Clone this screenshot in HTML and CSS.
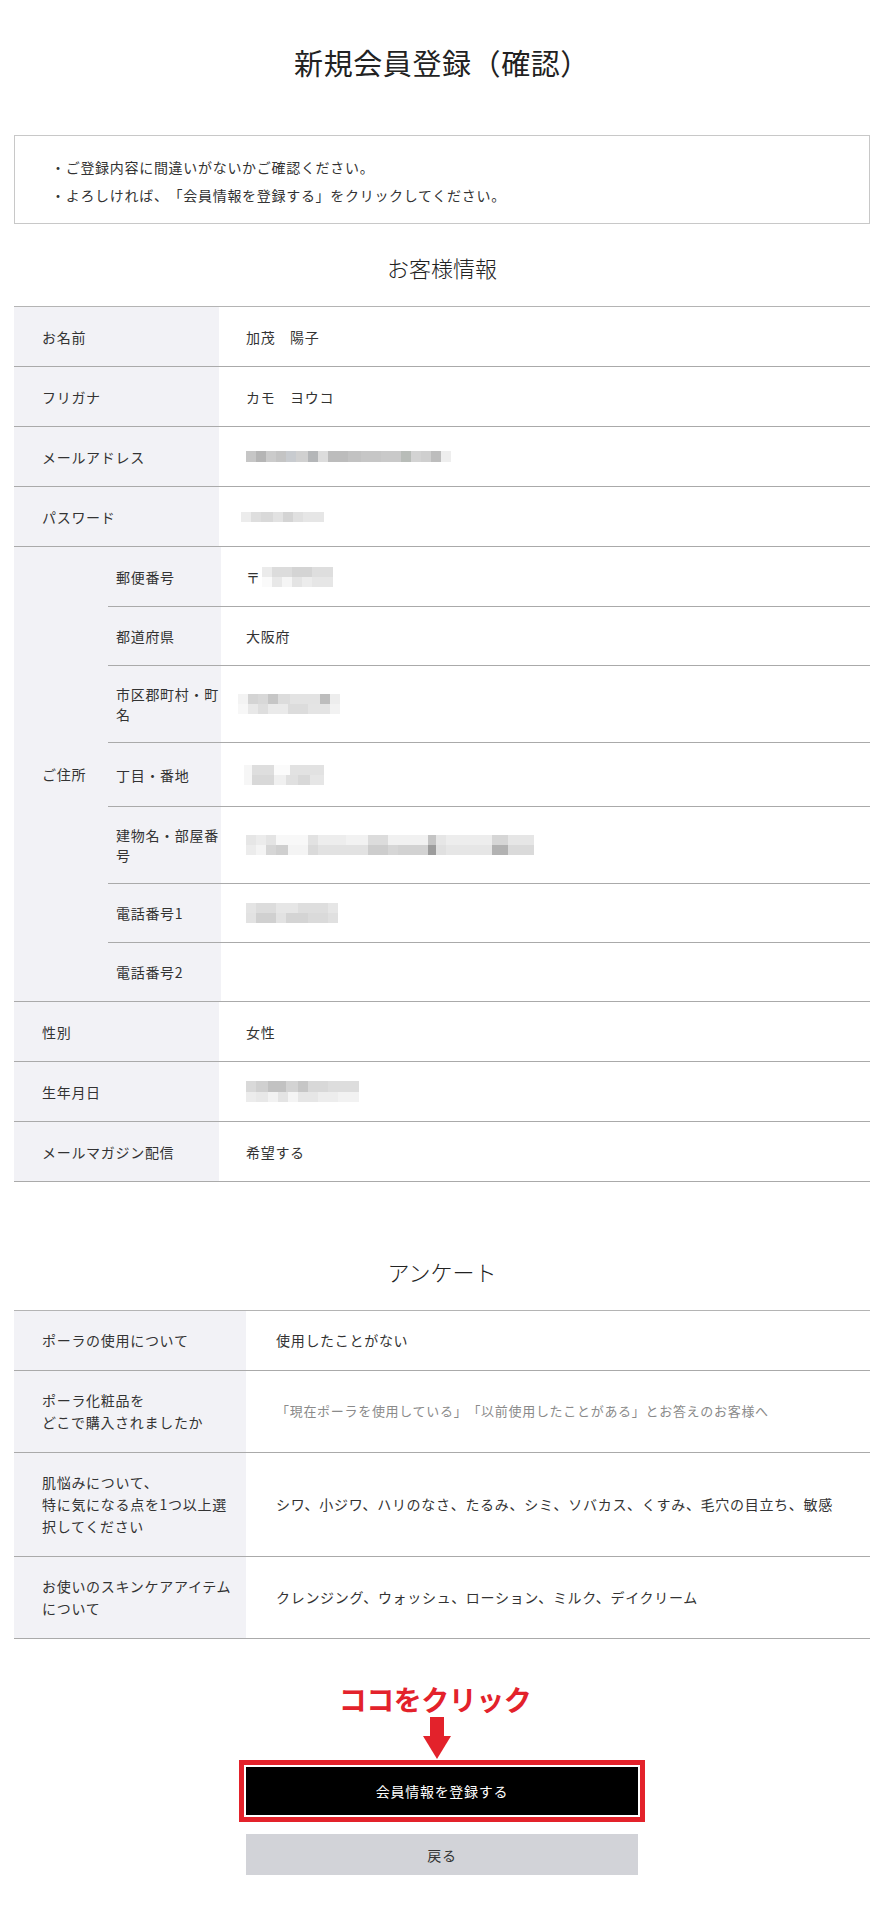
FILE: index.html
```html
<!DOCTYPE html>
<html lang="ja">
<head>
<meta charset="utf-8">
<title>新規会員登録（確認）</title>
<link rel="stylesheet" href="styles.css">
</head>
<body>
<main class="page">
  <h1 class="page-title">新規会員登録（確認）</h1>

  <div class="notice">
    <p>・ご登録内容に間違いがないかご確認ください。</p>
    <p>・よろしければ、「会員情報を登録する」をクリックしてください。</p>
  </div>

  <h2 class="section-title">お客様情報</h2>
  <div class="table info">
    <div class="row"><div class="th">お名前</div><div class="td">加茂　陽子</div></div>
    <div class="row"><div class="th">フリガナ</div><div class="td">カモ　ヨウコ</div></div>
    <div class="row"><div class="th">メールアドレス</div><div class="td"><span class="mosaic mz-mail"></span></div></div>
    <div class="row"><div class="th">パスワード</div><div class="td"><span class="mosaic mz-pass"></span></div></div>
    <div class="row addr">
      <div class="th addr-th">ご住所</div>
      <div class="subrows">
        <div class="subrow"><div class="sth">郵便番号</div><div class="td">〒<span class="mosaic mz-zip"></span></div></div>
        <div class="subrow"><div class="sth">都道府県</div><div class="td">大阪府</div></div>
        <div class="subrow"><div class="sth">市区郡町村・町名</div><div class="td"><span class="mosaic mz-city"></span></div></div>
        <div class="subrow tall"><div class="sth">丁目・番地</div><div class="td"><span class="mosaic mz-block"></span></div></div>
        <div class="subrow"><div class="sth">建物名・部屋番号</div><div class="td"><span class="mosaic mz-bldg"></span></div></div>
        <div class="subrow"><div class="sth">電話番号1</div><div class="td"><span class="mosaic mz-tel"></span></div></div>
        <div class="subrow"><div class="sth">電話番号2</div><div class="td"></div></div>
      </div>
    </div>
    <div class="row"><div class="th">性別</div><div class="td">女性</div></div>
    <div class="row"><div class="th">生年月日</div><div class="td"><span class="mosaic mz-birth"></span></div></div>
    <div class="row"><div class="th">メールマガジン配信</div><div class="td">希望する</div></div>
  </div>

  <h2 class="section-title survey-title">アンケート</h2>
  <div class="table survey">
    <div class="row"><div class="th">ポーラの使用について</div><div class="td">使用したことがない</div></div>
    <div class="row"><div class="th">ポーラ化粧品を<br>どこで購入されましたか</div><div class="td note">「現在ポーラを使用している」「以前使用したことがある」とお答えのお客様へ</div></div>
    <div class="row"><div class="th">肌悩みについて、<br>特に気になる点を1つ以上選択してください</div><div class="td">シワ、小ジワ、ハリのなさ、たるみ、シミ、ソバカス、くすみ、毛穴の目立ち、敏感</div></div>
    <div class="row"><div class="th">お使いのスキンケアアイテムについて</div><div class="td">クレンジング、ウォッシュ、ローション、ミルク、デイクリーム</div></div>
  </div>

  <div class="actions">
    <p class="callout">ココをクリック</p>
    <svg class="arrow" width="28" height="42" viewBox="0 0 28 42" aria-hidden="true">
      <rect x="7" y="0" width="14" height="19" fill="#e3222b"/>
      <polygon points="0,19 28,19 14,42" fill="#e3222b"/>
    </svg>
    <div class="highlight">
      <button class="btn btn-primary" type="button">会員情報を登録する</button>
    </div>
    <button class="btn btn-back" type="button">戻る</button>
  </div>
</main>
</body>
</html>
```
FILE: styles.css
```css
* { box-sizing: border-box; }

html, body {
  margin: 0;
  padding: 0;
  background: #fff;
}

body {
  font-family: "Noto Sans CJK JP", "Noto Sans", sans-serif;
  color: #333;
  font-size: 14px;
  letter-spacing: 0.05em;
  text-spacing-trim: space-all;
}

.page {
  width: 856px;
  margin: 0 auto;
  padding-bottom: 40px;
}

.page-title {
  margin: 42px 0 0;
  font-size: 29px;
  line-height: 40px;
  font-weight: 400;
  letter-spacing: 0.02em;
  text-align: center;
  color: #222;
}

.notice {
  margin-top: 53px;
  border: 1px solid #c8c8c8;
  padding: 17px 20px 14px 36px;
}

.notice p {
  margin: 0;
  line-height: 28px;
  font-size: 14px;
  color: #333;
}

.section-title {
  margin: 27px 0 23px;
  font-size: 22px;
  line-height: 32px;
  font-weight: 300;
  letter-spacing: 0;
  text-align: center;
  color: #222;
}

.survey-title {
  margin-top: 73px;
}

.table {
  border-top: 1px solid #b4b4b4;
}

.row {
  display: flex;
  border-bottom: 1px solid #aaaaaa;
}

.th {
  background: #f2f2f6;
  display: flex;
  align-items: center;
}

.td {
  flex: 1;
  display: flex;
  align-items: center;
  color: #333;
}

/* customer info table */
.info .row {
  min-height: 60px;
}

.info .th {
  width: 205px;
  padding: 18px 10px 18px 28px;
  line-height: 20px;
}

.info .td {
  padding: 18px 10px 18px 27px;
  line-height: 20px;
}

.info .addr-th {
  width: 94px;
  padding-right: 0;
}

.subrows {
  flex: 1;
  display: flex;
  flex-direction: column;
}

.subrow {
  display: flex;
  min-height: 59px;
}

.subrow.tall {
  min-height: 64px;
}

.subrow + .subrow {
  border-top: 1px solid #aaaaaa;
}

.sth {
  width: 113px;
  background: #f2f2f6;
  padding: 18px 0 18px 8px;
  line-height: 20px;
  display: flex;
  align-items: center;
}

.subrow .td {
  padding-left: 25px;
}

/* survey table */
.survey .th {
  width: 232px;
  padding: 18px 12px 19px 28px;
  line-height: 22px;
}

.survey .td {
  padding: 18px 10px 19px 30px;
  line-height: 22px;
}

.survey .td.note {
  font-size: 13px;
  color: #8a8a8a;
}

/* pixelated (blurred) values */
.mosaic {
  display: inline-block;
  background-repeat: no-repeat;
}

.mz-mail {
  width: 205px;
  height: 11px;
  background-image: linear-gradient(90deg,
    #c6c6c6 0 10px, #b5b5b5 10px 20px, #cbcbcb 20px 30px, #c4c4c4 30px 40px,
    #c8cbcf 40px 50px, #d0d0d0 50px 62px, #b4b6b8 62px 72px, #dcdcdc 72px 82px,
    #bcbcbc 82px 102px, #c2c2c2 102px 115px, #c6c6c6 115px 135px, #c9c9c9 135px 155px,
    #b8bcb8 155px 165px, #d3d3d3 165px 175px, #cfcfcf 175px 185px, #bdbdbd 185px 195px,
    #eeeeee 195px 205px);
}

.mz-pass {
  width: 83px;
  height: 10px;
  margin-left: -5px;
  background-image: linear-gradient(90deg,
    #ececec 0 10px, #dedede 10px 20px, #d9d9d9 20px 32px, #e2e2e2 32px 42px,
    #d4d4d4 42px 52px, #e0e0e0 52px 62px, #e6e6e6 62px 83px);
}

.mz-zip {
  width: 71px;
  height: 20px;
  margin-left: 1px;
  background-image:
    linear-gradient(90deg, #ebebeb 0 10px, #dcdcdc 10px 30px, #d4d4d4 30px 50px, #dedede 50px 71px),
    linear-gradient(90deg, #fafafa 0 10px, #e8e8e8 10px 20px, #f5f5f5 20px 30px, #e4e4e4 30px 40px, #ececec 40px 50px, #e6e6e6 50px 71px);
  background-size: 100% 10px, 100% 10px;
  background-position: 0 0, 0 10px;
}

.mz-city {
  width: 102px;
  height: 20px;
  margin-left: -8px;
  background-image:
    linear-gradient(90deg, #f3f3f3 0 10px, #d4d4d4 10px 20px, #d8d8d8 20px 30px, #c6c6c6 30px 40px, #dcdcdc 40px 52px, #e3e3e3 52px 82px, #bdbdbd 82px 92px, #ededed 92px 102px),
    linear-gradient(90deg, #f7f7f7 0 10px, #e8e8e8 10px 20px, #dedede 20px 30px, #eaeaea 30px 50px, #dcdcdc 50px 70px, #e4e4e4 70px 92px, #f2f2f2 92px 102px);
  background-size: 100% 10px, 100% 10px;
  background-position: 0 0, 0 10px;
}

.mz-block {
  width: 80px;
  height: 20px;
  margin-left: -2px;
  background-image:
    linear-gradient(90deg, #f6f6f6 0 8px, #dedede 8px 30px, #fbfbfb 30px 46px, #e2e2e2 46px 80px),
    linear-gradient(90deg, #f6f6f6 0 8px, #d8d8d8 8px 30px, #f0f0f0 30px 42px, #e0e0e0 42px 54px, #d8d8d8 54px 66px, #e6e6e6 66px 80px);
  background-size: 100% 10px, 100% 10px;
  background-position: 0 0, 0 10px;
}

.mz-bldg {
  width: 288px;
  height: 20px;
  background-image:
    linear-gradient(90deg,
      #e6e6e6 0 10px, #ececec 10px 20px, #e4e4e4 20px 30px, #f8f8f8 30px 62px,
      #e2e2e2 62px 72px, #ededed 72px 100px, #f2f2f2 100px 122px, #dcdcdc 122px 142px,
      #f1f1f1 142px 182px, #c4c4c4 182px 190px, #e6e6e6 190px 200px, #ededed 200px 246px,
      #d6d6d6 246px 262px, #e6e6e6 262px 288px),
    linear-gradient(90deg,
      #ececec 0 10px, #f4f4f4 10px 20px, #d6d6d6 20px 30px, #cfcfcf 30px 42px,
      #f4f4f4 42px 62px, #dadada 62px 72px, #e2e2e2 72px 122px, #cdcdcd 122px 142px,
      #d6d6d6 142px 152px, #d2d2d2 152px 182px, #9c9c9c 182px 190px, #e0e0e0 190px 200px,
      #e6e6e6 200px 246px, #b2b2b2 246px 262px, #dadada 262px 288px);
  background-size: 100% 10px, 100% 10px;
  background-position: 0 0, 0 10px;
}

.mz-tel {
  width: 92px;
  height: 20px;
  background-image:
    linear-gradient(90deg, #e4e4e4 0 10px, #dcdcdc 10px 30px, #e6e6e6 30px 52px, #dedede 52px 82px, #e6e6e6 82px 92px),
    linear-gradient(90deg, #e2e2e2 0 10px, #d0d0d0 10px 30px, #e2e2e2 30px 40px, #d4d4d4 40px 62px, #dadada 62px 82px, #e0e0e0 82px 92px);
  background-size: 100% 10px, 100% 10px;
  background-position: 0 0, 0 10px;
}

.mz-birth {
  width: 113px;
  height: 21px;
  background-image:
    linear-gradient(90deg, #d9d9d9 0 10px, #d0d0d0 10px 22px, #c2c2c2 22px 40px, #d3d3d3 40px 52px, #c6c6c6 52px 62px, #d8d8d8 62px 82px, #dddddd 82px 113px),
    linear-gradient(90deg, #ececec 0 10px, #e8e8e8 10px 22px, #f2f2f2 22px 32px, #e4e4e4 32px 42px, #f4f4f4 42px 52px, #e6e6e6 52px 72px, #ededed 72px 92px, #f2f2f2 92px 113px);
  background-size: 100% 11px, 100% 10px;
  background-position: 0 0, 0 11px;
}

/* actions */
.actions {
  display: flex;
  flex-direction: column;
  align-items: center;
  margin-top: 42px;
}

.callout {
  margin: 0 14px 0 0;
  font-size: 28px;
  line-height: 36px;
  font-weight: 700;
  color: #e3222b;
  letter-spacing: -0.5px;
}

.arrow {
  display: block;
  margin-right: 10px;
}

.highlight {
  margin-top: 1px;
  border: 5px solid #e3222b;
  padding: 2px;
  background: #fff;
}

.btn {
  display: block;
  width: 392px;
  border: 0;
  margin: 0;
  font-family: inherit;
  font-size: 14px;
  letter-spacing: 0.05em;
  cursor: pointer;
}

.btn-primary {
  height: 48px;
  background: #000;
  color: #fff;
}

.btn-back {
  margin-top: 12px;
  height: 41px;
  background: #d2d3d8;
  color: #333;
}
```
